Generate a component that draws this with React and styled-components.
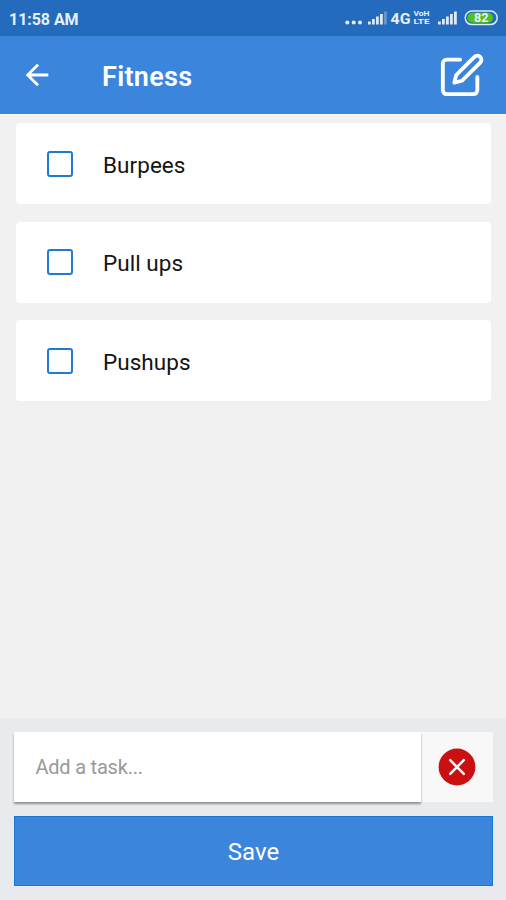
import { useState } from "react";
import styled, { createGlobalStyle } from "styled-components";

const GlobalStyle = createGlobalStyle`
  * {
    box-sizing: border-box;
  }
  body {
    margin: 0;
    font-family: Roboto, "Liberation Sans", sans-serif;
  }
`;

const Screen = styled.div`
  display: flex;
  flex-direction: column;
  width: 506px;
  height: 900px;
  overflow: hidden;
  background-color: #f1f1f1;
`;

const StatusBar = styled.div`
  display: flex;
  align-items: center;
  justify-content: space-between;
  height: 36px;
  padding: 2px 8px 0 9px;
  background-color: #246bbd;
  color: #e6f0fb;
  > time {
    padding-top: 1px;
    font-size: 16px;
    font-weight: 700;
    letter-spacing: -0.05px;
    line-height: 20px;
  }
  > svg {
    display: block;
  }
`;

const Header = styled.header`
  display: flex;
  align-items: center;
  height: 78px;
  padding: 0 21px 0 20px;
  background-color: #3b86dc;
  color: white;
  > h1 {
    flex: 1;
    margin: 0 0 0 48px;
    padding-top: 3px;
    font-size: 27px;
    font-weight: 600;
    letter-spacing: 0.3px;
    line-height: 32px;
  }
`;

const IconButton = styled.button`
  display: flex;
  padding: 0;
  border: none;
  background: none;
  color: inherit;
  cursor: pointer;
`;

const TaskList = styled.ul`
  flex: 1;
  display: flex;
  flex-direction: column;
  gap: 17.5px;
  margin: 0;
  padding: 8px 15px 0 16px;
  border-top: 1px solid #f8f8f8;
  list-style: none;
`;

const Task = styled.li`
  height: 81px;
  border-radius: 4px;
  background-color: white;
  > label {
    display: flex;
    align-items: center;
    height: 100%;
    padding-left: 31px;
    gap: 30px;
    font-size: 22.5px;
    letter-spacing: 0.05px;
    color: #141414;
    cursor: pointer;
  }
  span {
    padding-top: 2px;
  }
`;

const Checkbox = styled.input`
  appearance: none;
  width: 26px;
  height: 26px;
  margin: 0;
  border: 2px solid #1f7ad3;
  border-radius: 3px;
  background-color: ${({ checked }) => (checked ? "#1f7ad3" : "white")};
`;

const Footer = styled.form`
  display: flex;
  flex-direction: column;
  gap: 14px;
  height: 182px;
  padding: 14px 13.5px 14px 14.4px;
  background-color: #e8eaed;
`;

const InputRow = styled.div`
  display: flex;
  height: 70px;
  background-color: #f8f8f8;
`;

const TaskInput = styled.input`
  width: 407px;
  height: 70px;
  padding: 0 21px;
  border: none;
  outline: none;
  background-color: white;
  box-shadow: 0 1.5px 2px rgba(0, 0, 0, 0.38);
  font-family: inherit;
  font-size: 20px;
  letter-spacing: -0.2px;
  &::placeholder {
    color: #999;
  }
`;

const ClearButton = styled(IconButton)`
  flex: 1;
  align-items: center;
  justify-content: center;
`;

const SaveButton = styled.button`
  height: 70px;
  padding: 2px 0 0;
  border: 1px solid #1976d2;
  background-color: #3b86dc;
  color: white;
  font-family: inherit;
  font-size: 24px;
  cursor: pointer;
`;

const Signal = ({ x, weak }) => (
  <g fill="#dce9f8">
    <rect x={x} y="21.5" width="2.8" height="3" />
    <rect x={x + 4} y="19" width="2.8" height="5.5" />
    <rect x={x + 8} y="16.5" width="2.8" height="8" />
    <rect x={x + 12} y="14" width="2.8" height="10.5" />
    <rect x={x + 16} y="11.5" width="2.8" height="13" opacity={weak ? 0.35 : 1} />
  </g>
);

const StatusIcons = () => (
  <svg
    width="158"
    height="34"
    viewBox="340 2 158 34"
    fontFamily="Roboto, sans-serif"
    fontWeight="700"
    fill="#e6f0fb"
  >
    <circle cx="347.3" cy="22.4" r="2" />
    <circle cx="353.7" cy="22.4" r="2" />
    <circle cx="360" cy="22.4" r="2" />
    <Signal x={368} weak />
    <text x="390.5" y="24" fontSize="15" textLength="20" lengthAdjust="spacingAndGlyphs">
      4G
    </text>
    <text x="413.5" y="16.2" fontSize="7" textLength="16" lengthAdjust="spacingAndGlyphs">
      VoH
    </text>
    <text x="413.5" y="24.2" fontSize="7" textLength="16" lengthAdjust="spacingAndGlyphs">
      LTE
    </text>
    <Signal x={438} />
    <rect x="465.2" y="11" width="32" height="13.6" rx="6.8" fill="none" stroke="#dce9f8" strokeWidth="1.5" />
    <path
      d="M472.5 12.8h15.5a5 5 0 0 1 0 10h-15.5a5 5 0 0 1 0-10z"
      fill="#50c41c"
    />
    <text x="474" y="22" fontSize="12" textLength="14.5" lengthAdjust="spacingAndGlyphs">
      82
    </text>
  </svg>
);

const BackIcon = () => (
  <svg width="34" height="34" viewBox="0 0 24 24" fill="currentColor">
    <path d="M20 11H7.83l5.59-5.59L12 4l-8 8 8 8 1.41-1.41L7.83 13H20v-2z" />
  </svg>
);

const EditIcon = () => (
  <svg
    width="46"
    height="46"
    viewBox="0 0 24 24"
    fill="none"
    stroke="currentColor"
    strokeWidth="2"
    strokeLinecap="round"
    strokeLinejoin="round"
  >
    <path d="M11 4H4a2 2 0 0 0-2 2v14a2 2 0 0 0 2 2h14a2 2 0 0 0 2-2v-7" />
    <path d="M18.5 2.5a2.121 2.121 0 0 1 3 3L12 15l-4 1 1-4 9.5-9.5z" />
  </svg>
);

const ClearIcon = () => (
  <svg width="38" height="38" viewBox="0 0 38 38">
    <circle cx="19" cy="19" r="18.4" fill="#cb1011" />
    <path
      d="M12.2 12.2l13.6 13.6M25.8 12.2L12.2 25.8"
      stroke="white"
      strokeWidth="2.5"
      strokeLinecap="round"
    />
  </svg>
);

const App = () => {
  const [tasks, setTasks] = useState([
    { name: "Burpees", done: false },
    { name: "Pull ups", done: false },
    { name: "Pushups", done: false },
  ]);
  const [newTask, setNewTask] = useState("");

  const toggleTask = (name) => {
    setTasks(
      tasks.map((task) =>
        task.name === name ? { ...task, done: !task.done } : task
      )
    );
  };

  const saveTask = (e) => {
    e.preventDefault();
    if (!newTask) return;
    setTasks([...tasks, { name: newTask, done: false }]);
    setNewTask("");
  };

  return (
    <>
      <GlobalStyle />
      <Screen>
        <StatusBar>
          <time>11:58 AM</time>
          <StatusIcons />
        </StatusBar>
        <Header>
          <IconButton aria-label="Back">
            <BackIcon />
          </IconButton>
          <h1>Fitness</h1>
          <IconButton aria-label="Edit">
            <EditIcon />
          </IconButton>
        </Header>
        <TaskList>
          {tasks.map((task) => (
            <Task key={task.name}>
              <label>
                <Checkbox
                  type="checkbox"
                  checked={task.done}
                  onChange={() => toggleTask(task.name)}
                />
                <span>{task.name}</span>
              </label>
            </Task>
          ))}
        </TaskList>
        <Footer onSubmit={saveTask}>
          <InputRow>
            <TaskInput
              placeholder="Add a task..."
              value={newTask}
              onChange={(e) => setNewTask(e.target.value)}
            />
            <ClearButton
              type="button"
              aria-label="Clear"
              onClick={() => setNewTask("")}
            >
              <ClearIcon />
            </ClearButton>
          </InputRow>
          <SaveButton type="submit">Save</SaveButton>
        </Footer>
      </Screen>
    </>
  );
};

export default App;
